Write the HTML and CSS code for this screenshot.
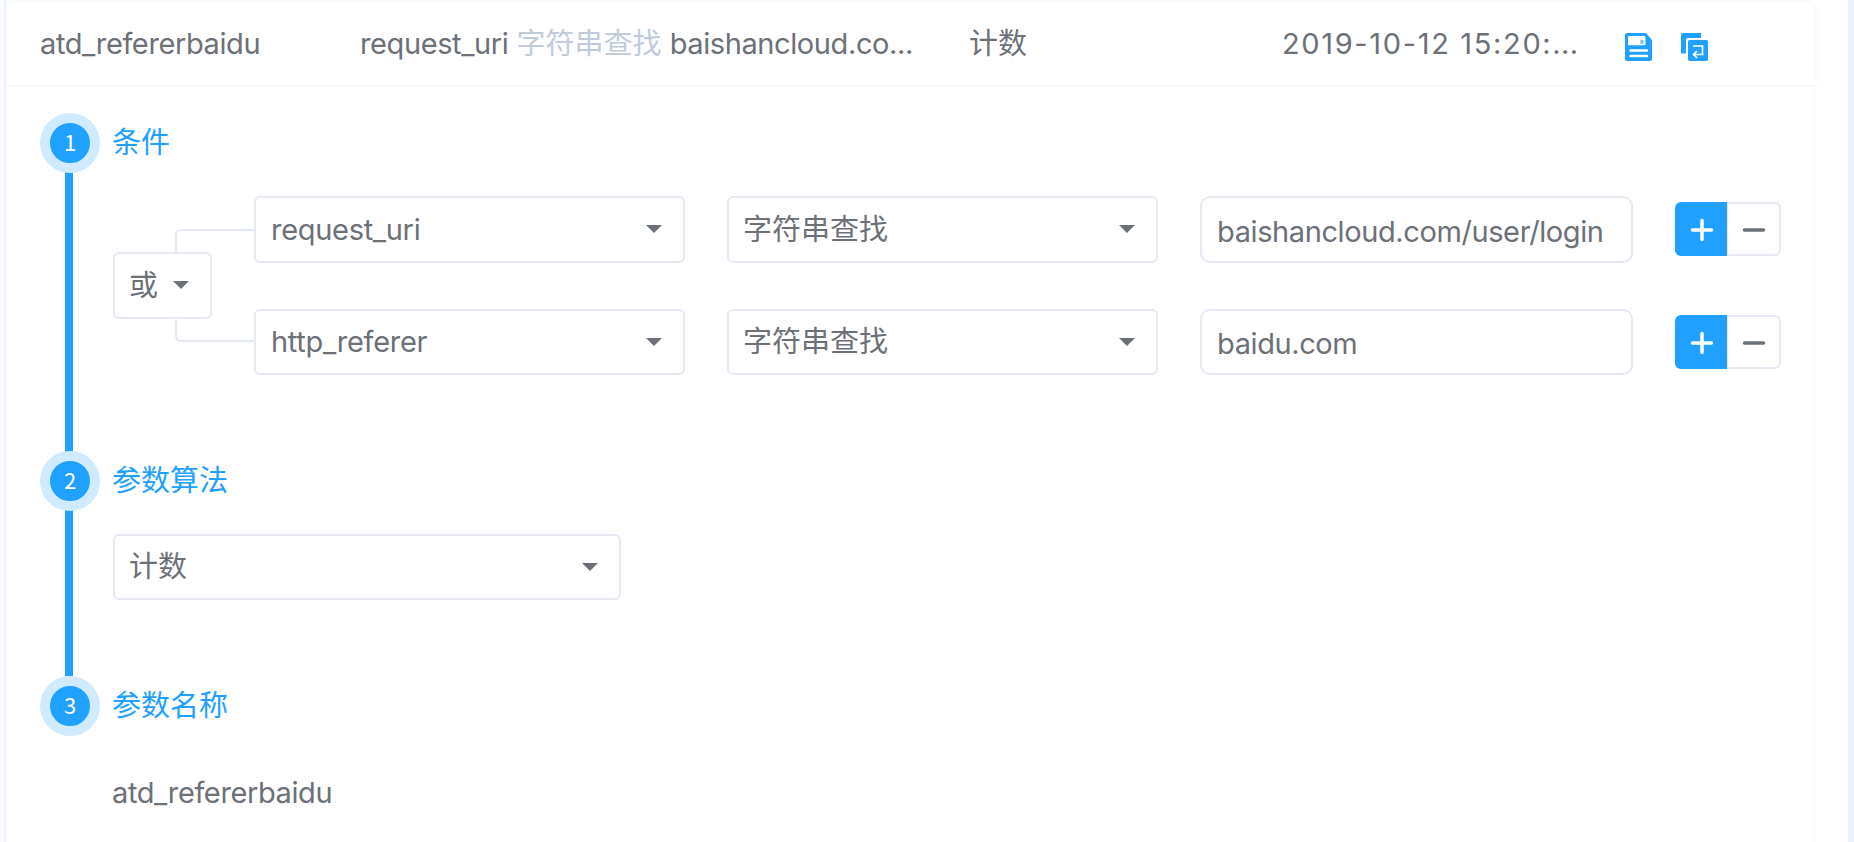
FILE: index.html
```html
<!DOCTYPE html>
<html lang="zh-CN">
<head>
<meta charset="utf-8">
<title>atd_refererbaidu</title>
<link rel="stylesheet" href="styles.css">
</head>
<body>
<main class="panel">
  <header class="summary">
    <span class="summary-name latin">atd_refererbaidu</span>
    <span class="summary-rule"><span class="latin">request_uri</span> <span class="operator">字符串查找</span> <span class="latin">baishancloud.co...</span></span>
    <span class="summary-algo">计数</span>
    <span class="summary-date">2019-10-12 15:20:<span class="dots">...</span></span>
    <svg class="icon" viewBox="0 0 28 28"><path fill="#20a0ff" d="M2 0H21L27 7V26Q27 28 25 28H2Q0 28 0 26V2Q0 0 2 0Z"/><path fill="#fff" d="M3 4Q3 3 4 3H19Q20.500 3 20.500 5V11Q20.500 12.200 19 12.200H4Q3 12.200 3 11Z"/><path fill="#70c3ff" d="M15.500 7H18.300V11H15.500Z"/><path stroke="#fff" stroke-width="2.400" stroke-linecap="round" d="M5.500 17.500H22M5.500 23H22"/></svg>
    <svg class="icon" viewBox="0 0 28 28"><path fill="#20a0ff" d="M1.500 0H20V5H7Q5 5 5 7V20.500H0V1.500Q0 0 1.500 0ZM8.500 7H25.500Q27 7 27 8.500V26Q27 28 25.500 28H8.500Q7 28 7 26V8.500Q7 7 8.500 7Z"/><path fill="none" stroke="#fff" stroke-width="1.700" d="M12 13H21.500V21.500H13M16 18L12.500 21.500L16 25"/></svg>
  </header>
  <section class="steps">
    <article class="step step-condition">
      <div class="rail"><b class="badge">1</b></div>
      <div class="content">
        <h2 class="title">条件</h2>
        <div class="conditions">
          <div class="logic">
            <div class="link link-top"></div>
            <div class="select select-logic"><span>或</span><i class="caret"></i></div>
            <div class="link link-bottom"></div>
          </div>
          <div class="rows">
            <div class="row">
              <div class="select"><span class="latin">request_uri</span><i class="caret"></i></div>
              <div class="select"><span>字符串查找</span><i class="caret"></i></div>
              <div class="input"><span class="latin">baishancloud.com/user/login</span></div>
              <div class="buttons"><span class="btn add"><svg viewBox="0 0 24 24"><path d="M12 2.500V21.500M2.500 12H21.500"/></svg></span><span class="btn remove"><svg viewBox="0 0 24 24"><path d="M2.500 12H21.500"/></svg></span></div>
            </div>
            <div class="row">
              <div class="select"><span class="latin">http_referer</span><i class="caret"></i></div>
              <div class="select"><span>字符串查找</span><i class="caret"></i></div>
              <div class="input"><span class="latin">baidu.com</span></div>
              <div class="buttons"><span class="btn add"><svg viewBox="0 0 24 24"><path d="M12 2.500V21.500M2.500 12H21.500"/></svg></span><span class="btn remove"><svg viewBox="0 0 24 24"><path d="M2.500 12H21.500"/></svg></span></div>
            </div>
          </div>
        </div>
      </div>
    </article>
    <article class="step step-algorithm">
      <div class="rail"><b class="badge">2</b></div>
      <div class="content">
        <h2 class="title">参数算法</h2>
        <div class="select select-algo"><span>计数</span><i class="caret"></i></div>
      </div>
    </article>
    <article class="step step-name">
      <div class="rail"><b class="badge">3</b></div>
      <div class="content">
        <h2 class="title">参数名称</h2>
        <p class="value latin">atd_refererbaidu</p>
      </div>
    </article>
  </section>
</main>
</body>
</html>
```
FILE: styles.css
```css
* { box-sizing: border-box; }
body {
  margin: 0;
  height: 842px;
  overflow: hidden;
  padding-left: 4px;
  background: #fbfcff;
  color: #6c7178;
  font: 29px/40px Inter, "Noto Sans CJK SC", sans-serif;
  white-space: nowrap;
}
.panel {
  width: 1844px;
  height: 842px;
  padding-top: 2px;
  border-left: 2px solid #eaf2ff;
  background: #fff;
  box-shadow: 0 0 0 6px #eaf1fd;
  clip-path: inset(0 -6px 0 0);
}
.latin { letter-spacing: -0.4px; }
.summary {
  display: flex;
  align-items: center;
  width: 1808px;
  height: 85px;
  padding: 0 0 0 34px;
  border-bottom: 2px solid #f9f9fa;
  border-radius: 8px 8px 0 0;
  background: #fff;
  box-shadow: 0 0 10px #eff5ff;
  clip-path: inset(-2px -14px 0 0);
}
.summary-name { width: 320px; }
.summary-rule { width: 609px; }
.summary-algo { width: 313px; }
.summary-date { width: 343px; letter-spacing: 1.65px; }
.dots { letter-spacing: 0.4px; }
.operator { color: #c0ccda; }
.icon { width: 28px; height: 28px; margin: 6px 28px 0 0; }
.steps {
  width: 1809px;
  height: 755px;
  padding: 26px 0 0 34px;
  border-right: 1px solid #f8faff;
}
.step { display: flex; gap: 13px; }
.step-condition { height: 337.500px; }
.step-algorithm { height: 225px; }
.rail {
  width: 60px;
  background: linear-gradient(#20a0ff, #20a0ff) 25px 20px / 8px 100% no-repeat;
}
.step-algorithm .rail { background-position-y: 0; }
.step-name .rail { background: none; }
.badge {
  display: block;
  width: 60px;
  height: 60px;
  border: 10px solid #d0eaff;
  border-radius: 50%;
  background: #20a0ff;
  color: #fff;
  font: 22px/37px "Noto Sans CJK SC", sans-serif;
  text-align: center;
}
.title {
  margin: 0 0 0 -1px;
  height: 60px;
  color: #20a0ff;
  font-size: 29px;
  font-weight: 400;
  line-height: 59px;
}
.conditions { display: flex; margin-top: 23px; }
.logic { width: 141px; padding-top: 33px; }
.link { width: 79px; margin-left: 62px; border-left: 2px solid #e4e9f4; }
.link-top { height: 23px; border-top: 2px solid #e4e9f4; border-top-left-radius: 6px; }
.link-bottom { height: 23px; border-bottom: 2px solid #e4e9f4; border-bottom-left-radius: 6px; }
.rows { display: grid; gap: 46px; }
.row {
  display: grid;
  grid-template-columns: 431px 431px 433px 106px;
  column-gap: 42px;
  align-items: center;
}
.select, .input {
  display: flex;
  align-items: center;
  justify-content: space-between;
  height: 66.500px;
  padding: 1px 21px 0 14px;
  border: 2px solid #e4e9f4;
  border-radius: 6px;
  background: #fff;
}
.select .latin { margin-left: 1px; letter-spacing: -0.3px; }
.input { border-radius: 10px; padding: 5px 20px 0 15px; }
.select-logic { width: 99px; }
.select-algo { width: 508px; margin-top: 23px; }
.caret {
  margin-top: -1px;
  border: 8px solid transparent;
  border-top-color: #6c7178;
  border-bottom: 0;
}
.buttons { display: flex; height: 54px; }
.btn { display: grid; place-items: center; width: 54px; }
.btn svg { width: 24px; height: 24px; margin-top: 2px; stroke: #6c7178; stroke-width: 3.500; stroke-linecap: round; }
.add { width: 52px; border-radius: 6px 0 0 6px; background: #20a0ff; }
.add svg { stroke: #fff; margin-left: 2px; }
.remove { border: 2px solid #e4e9f4; border-left-width: 1px; border-radius: 0 6px 6px 0; }
.value { margin: 37px 0 0 -1px; }
```
